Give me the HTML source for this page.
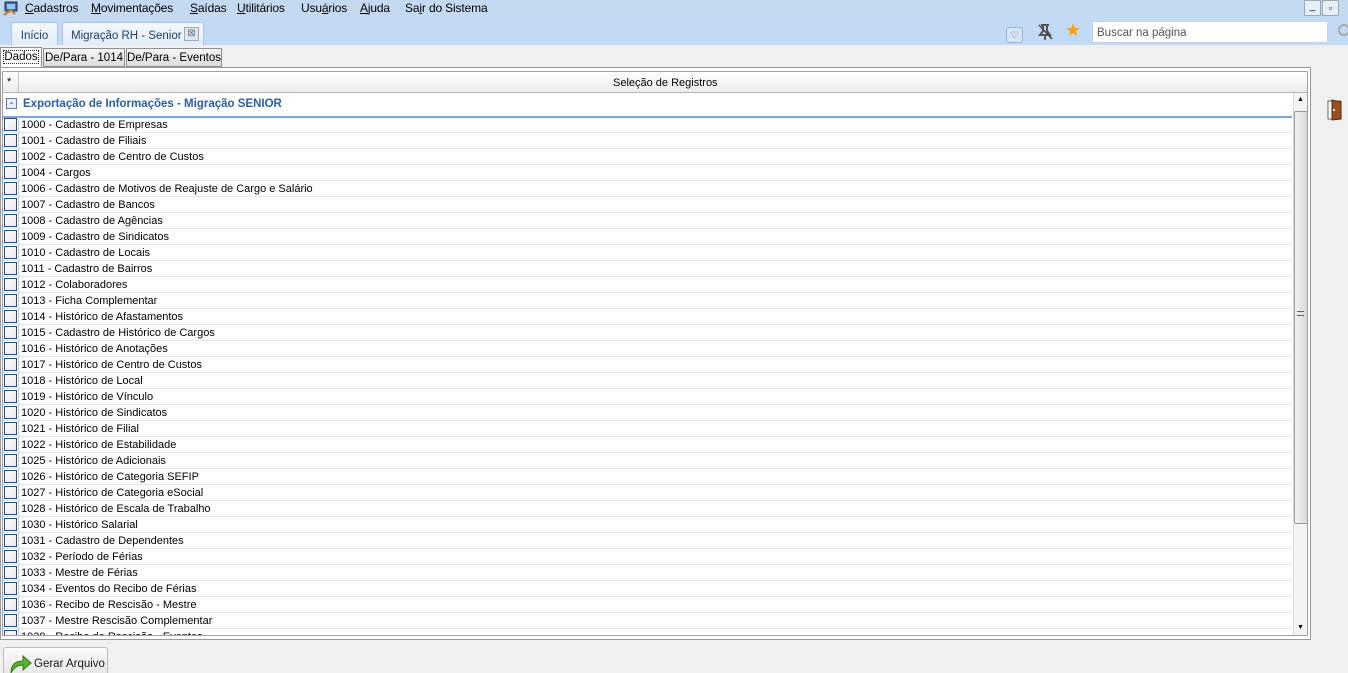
<!DOCTYPE html>
<html><head><meta charset="utf-8"><style>
*{margin:0;padding:0;box-sizing:border-box}
html,body{width:1348px;height:673px;overflow:hidden}
body{background:#f0f0f0;font-family:"Liberation Sans",sans-serif;font-size:11px;color:#000;position:relative}
.abs{position:absolute}
#menu{left:0;top:0;width:1348px;height:17px;background:#c5daf0}
#menu span{position:absolute;top:1px;font-size:12px;letter-spacing:-0.15px}
#tabbar{left:0;top:17px;width:1348px;height:28px;background:#c3daf5}
.tab{position:absolute;top:5px;height:23px;background:linear-gradient(#f4f9fe,#e3eefb);border:1px solid #a9c6e8;border-bottom:none;border-radius:3px 3px 0 0;color:#1e3d6b;padding:7px 0 0 0;text-align:center;font-size:11.5px;white-space:nowrap}
.st{position:absolute;top:48px;height:19px;border:1px solid #8f8f8f;background:linear-gradient(#f6f6f6,#dcdcdc);padding:3px 0 0;text-align:center;white-space:nowrap;font-size:11.5px}
#grid{left:0;top:67px;width:1311px;height:573px;border:1px solid #9a9a9a;background:#fff}
#inner{left:2px;top:71px;width:1306px;height:565px;border:1px solid #a0a0a0;background:#fff;overflow:hidden}
.row{position:absolute;left:0;width:1290px;height:16px;border-bottom:1px solid #e6e6e6}
.row .cb{position:absolute;left:1px;top:1px;width:13px;height:13px;border:1px solid #1d4f8a;background:linear-gradient(135deg,#fff,#e8e8e8)}
.row .t{position:absolute;left:18px;top:2px;white-space:nowrap;font-size:11px}
.row .d{position:absolute;left:15px;top:0;height:16px;border-left:1px solid #d0d0d0}
</style></head><body>
<div id="menu" class="abs">
<svg class="abs" style="left:3px;top:1px" width="16" height="15"><rect x="2" y="1" width="12" height="9" fill="#3a6fb3" stroke="#234" stroke-width="1"/><rect x="4" y="3" width="8" height="5" fill="#9cc4ee"/><path d="M1 14 L8 9 L12 13" stroke="#c57a2a" stroke-width="2" fill="none"/></svg>
<span style="left:25px"><u>C</u>adastros</span>
<span style="left:91px"><u>M</u>ovimentações</span>
<span style="left:190px"><u>S</u>aídas</span>
<span style="left:237px"><u>U</u>tilitários</span>
<span style="left:301px">Usu<u>á</u>rios</span>
<span style="left:360px"><u>A</u>juda</span>
<span style="left:405px">Sa<u>i</u>r do Sistema</span>
<div class="abs" style="left:1304px;top:0;width:17px;height:16px;border:1px solid #9ab;background:#e6eef8;font-size:10px;text-align:center;line-height:12px">_</div>
<div class="abs" style="left:1322px;top:0;width:17px;height:16px;border:1px solid #9ab;background:#e6eef8;font-size:9px;text-align:center;line-height:14px">▫</div>
</div>
<div id="tabbar" class="abs">
<div class="tab" style="left:11px;width:47px">Início</div>
<div class="tab" style="left:62px;width:142px;text-align:left;padding-left:8px">Migração RH - Senior
<span class="abs" style="left:121px;top:4px;width:15px;height:14px;border:1px solid #9ab;background:#dbe6f3;font-size:10px;line-height:12px;text-align:center;color:#777">⊠</span></div>
<div class="abs" style="left:1006px;top:10px;width:17px;height:16px;border:1px solid #98b4d6;border-radius:3px;background:#d6e5f6;font-size:9px;text-align:center;line-height:14px;color:#553">♡</div>
<svg class="abs" style="left:1036px;top:6px" width="18" height="18"><path d="M5 2h8M7 2v6l-3 4h10l-3-4V2M9 12v5" stroke="#555" stroke-width="2" fill="none"/><path d="M3 2L16 16" stroke="#444" stroke-width="1.5"/></svg>
<div class="abs" style="left:1065px;top:3px;font-size:18px;color:#f6a10e">★</div>
<div class="abs" style="left:1092px;top:4px;width:236px;height:22px;background:#fff;border:1px solid #c5d3e3;color:#555;padding:5px 4px;font-size:11.5px">Buscar na página</div>
<div class="abs" style="left:1338px;top:7px;width:12px;height:12px;border:2px solid #aaa;border-radius:50%"></div>
</div>
<div class="st" style="left:0;top:47px;width:42px;height:20px;background:#fff;border-bottom:none;z-index:2"><span style="outline:1px dotted #333">Dados</span></div>
<div class="st" style="left:43px;width:82px">De/Para - 1014</div>
<div class="st" style="left:126px;width:96px">De/Para - Eventos</div>
<div id="grid" class="abs"></div>
<div id="inner" class="abs">
<div class="abs" style="left:0;top:0;width:1304px;height:21px;background:linear-gradient(#fff,#ececec);border-bottom:1px solid #b5b5b5"></div>
<div class="abs" style="left:4px;top:4px">*</div>
<div class="abs" style="left:15px;top:0;height:21px;border-left:1px solid #c8c8c8"></div>
<div class="abs" style="left:610px;top:5px">Seleção de Registros</div>
<div class="abs" style="left:3px;top:26px;width:11px;height:11px;border:1px solid #5a7fb0;background:#e9f0f9;font-size:11px;line-height:8px;text-align:center;color:#335">-</div>
<div class="abs" style="left:20px;top:26px;color:#2b5ea8;font-weight:bold;font-size:11.5px;white-space:nowrap">Exportação de Informações - Migração SENIOR</div>
<div class="abs" style="left:0;top:44px;width:1289px;height:2px;background:#7ea6d8"></div>
<div class="abs" style="left:1290px;top:21px;width:15px;height:543px;background:#f3f3f3;border-left:1px solid #e0e0e0">
<div class="abs" style="left:3px;top:3px;font-size:7px">▲</div>
<div class="abs" style="left:0;top:18px;width:14px;height:413px;background:linear-gradient(90deg,#f2f2f2,#d8d8d8);border:1px solid #9a9a9a;border-radius:2px"></div>
<div class="abs" style="left:3px;top:218px;width:7px;height:5px;border-top:1px solid #666;border-bottom:1px solid #666"></div>
<div class="abs" style="left:3px;top:531px;font-size:7px">▼</div>
</div>
<div id="rows"></div>
</div>
<svg class="abs" style="left:1327px;top:99px" width="16" height="22"><rect x="1" y="2" width="13" height="18" fill="#fff" stroke="#666"/><path d="M5 1L14 3V20L5 21Z" fill="#9b4f22" stroke="#5a2a0f"/><rect x="6" y="10" width="2" height="2" fill="#eee"/></svg>
<div class="abs" style="left:3px;top:647px;width:105px;height:30px;border:1px solid #bbb;border-radius:3px;background:linear-gradient(#fafafa,#e6e6e6)">
<svg class="abs" style="left:4px;top:5px" width="24" height="22"><path d="M3 20C3 11 8 8 15 8V3l8 7-8 7v-5c-5 0-9 2-12 8z" fill="#5bb030" stroke="#2f7a14"/></svg>
<span class="abs" style="left:30px;top:10px;color:#1a1a1a;white-space:nowrap;font-size:11.5px">Gerar Arquivo</span></div>
<script>
var L=["1000 - Cadastro de Empresas","1001 - Cadastro de Filiais","1002 - Cadastro de Centro de Custos","1004 - Cargos","1006 - Cadastro de Motivos de Reajuste de Cargo e Salário","1007 - Cadastro de Bancos","1008 - Cadastro de Agências","1009 - Cadastro de Sindicatos","1010 - Cadastro de Locais","1011 - Cadastro de Bairros","1012 - Colaboradores","1013 - Ficha Complementar","1014 - Histórico de Afastamentos","1015 - Cadastro de Histórico de Cargos","1016 - Histórico de Anotações","1017 - Histórico de Centro de Custos","1018 - Histórico de Local","1019 - Histórico de Vínculo","1020 - Histórico de Sindicatos","1021 - Histórico de Filial","1022 - Histórico de Estabilidade","1025 - Histórico de Adicionais","1026 - Histórico de Categoria SEFIP","1027 - Histórico de Categoria eSocial","1028 - Histórico de Escala de Trabalho","1030 - Histórico Salarial","1031 - Cadastro de Dependentes","1032 - Período de Férias","1033 - Mestre de Férias","1034 - Eventos do Recibo de Férias","1036 - Recibo de Rescisão - Mestre","1037 - Mestre Rescisão Complementar","1039 - Recibo de Rescisão - Eventos"];
var h="";for(var i=0;i<L.length;i++){h+='<div class="row" style="top:'+(45+i*16)+'px"><div class="cb"></div><div class="d"></div><div class="t">'+L[i]+'</div></div>';}
document.getElementById("rows").innerHTML=h;
</script>
</body></html>
